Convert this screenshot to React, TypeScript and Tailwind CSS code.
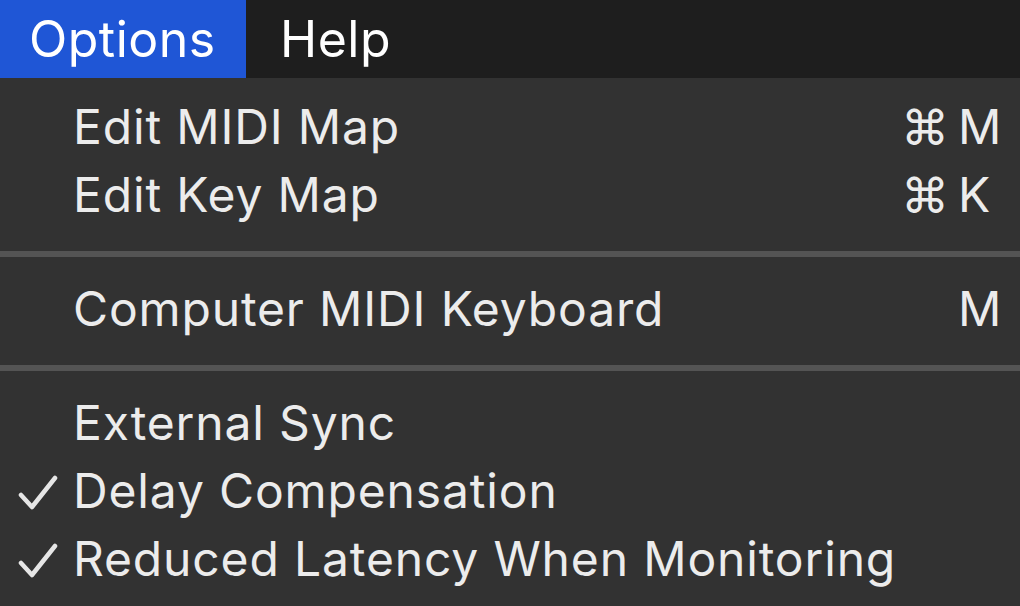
const font = { fontFamily: "Inter, 'Helvetica Neue', Arial, sans-serif" };

type Item = {
  label: string;
  checked?: boolean;
  mod?: string;
  keyChar?: string;
};

const groups: Item[][] = [
  [
    { label: "Edit MIDI Map", mod: "⌘", keyChar: "M" },
    { label: "Edit Key Map", mod: "⌘", keyChar: "K" },
  ],
  [{ label: "Computer MIDI Keyboard", keyChar: "M" }],
  [
    { label: "External Sync" },
    { label: "Delay Compensation", checked: true },
    { label: "Reduced Latency When Monitoring", checked: true },
  ],
];

const Check = () => (
  <svg width="40" height="36" viewBox="0 0 40 36" fill="none">
    <path d="M3 20 L14 32 L37 3" stroke="#e6e6e6" strokeWidth="4.5" strokeLinecap="round" strokeLinejoin="round" />
  </svg>
);

const MenuRow = ({ item }: { item: Item }) => (
  <div className="flex h-[68px] items-center">
    <div className="flex w-[73px] shrink-0 items-center pl-[18px] pt-[4px]">{item.checked && <Check />}</div>
    <div className="flex-1 whitespace-nowrap text-[48px] tracking-[0.85px] text-[#ececec]">{item.label}</div>
    <div className="flex w-[62px] shrink-0 items-center justify-end pr-[9px] text-[48px] text-[#ececec]">
      {item.mod}
    </div>
    <div className="w-[62px] shrink-0 text-[48px] text-[#ececec]">{item.keyChar}</div>
  </div>
);

export default function App() {
  return (
    <div className="flex h-[606px] w-[1020px] flex-col overflow-hidden bg-[#323232]" style={font}>
      <div className="flex h-[78px] shrink-0 items-center bg-[#1e1e1e] text-[50px] tracking-[0.5px] text-white">
        <div className="flex h-full w-[246px] items-center bg-[#1f56d6] pl-[29px]">Options</div>
        <div className="pl-[34px]">Help</div>
      </div>
      <div className="flex flex-col pt-[15px]">
        {groups.map((g, gi) => (
          <div key={gi}>
            {gi > 0 && (
              <div className="pb-[18px] pt-[22px]">
                <div className="h-[6px] bg-[#545454]" />
              </div>
            )}
            {g.map((item) => (
              <MenuRow key={item.label} item={item} />
            ))}
          </div>
        ))}
      </div>
    </div>
  );
}
